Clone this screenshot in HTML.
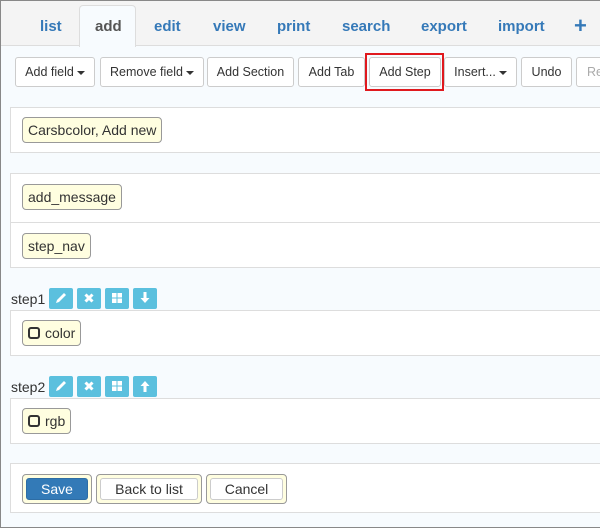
<!DOCTYPE html>
<html><head><style>
*{box-sizing:border-box;margin:0;padding:0}
body{width:600px;height:528px;overflow:hidden;font-family:"Liberation Sans",Arial,sans-serif;background:#fff}
.frame{position:absolute;left:0;top:0;width:620px;height:528px;border:1px solid #888;background:#f7fbfe}
.tabbar{position:absolute;left:1px;top:1px;width:620px;height:45px;background:#f4f4f4;border-bottom:1px solid #ddd}
.tab{position:absolute;top:18px;font-weight:bold;font-size:15px;color:#3579b8}
.active{position:absolute;left:79px;top:5px;width:57px;height:42px;background:#f7fbfe;border:1px solid #ddd;border-bottom:none;border-radius:4px 4px 0 0}
.btn{position:absolute;top:57px;height:30px;border:1px solid #ccc;border-radius:3px;background:#fff;font-size:12.5px;color:#333;text-align:center;line-height:28px}
.car{display:inline-block;border-left:4px solid transparent;border-right:4px solid transparent;border-top:4px solid #333;vertical-align:middle;margin-left:3px}
.panel{position:absolute;left:10px;width:600px;background:#fff;border:1px solid #ddd}
.chip{position:absolute;left:22px;height:26px;border:1px solid #999;border-radius:4px;background:#fffee0;font-size:14px;color:#333;line-height:24px;padding:0 5px}
.sq{display:inline-block;width:12px;height:12px;border:2.5px solid #333;border-radius:3px;vertical-align:-1px;margin-right:5px}
.lbl{position:absolute;left:11px;font-size:14px;color:#333}
.ib{position:absolute;width:24px;height:21px;background:#5bc0de;border-radius:2px}
.ib svg{position:absolute;left:5px;top:3px}
.wrap{position:absolute;top:474px;height:30px;border:1px solid #999;border-radius:4px;background:#fffee0;padding:3px}
.wrap div{height:22px;border:1px solid #ccc;border-radius:3px;background:#fff;font-size:14px;color:#333;line-height:20px;text-align:center}
</style></head><body>
<div class="frame"></div>
<div class="tabbar"></div>
<div class="active"></div>
<span class="tab" style="left:40px">list</span>
<span class="tab" style="left:95px;color:#555">add</span>
<span class="tab" style="left:154px">edit</span>
<span class="tab" style="left:213px">view</span>
<span class="tab" style="left:277px">print</span>
<span class="tab" style="left:342px">search</span>
<span class="tab" style="left:421px">export</span>
<span class="tab" style="left:498px">import</span>
<span class="tab" style="left:574px;top:13px;font-size:22px">+</span>
<div class="btn" style="left:15px;width:80px">Add field<span class="car"></span></div>
<div class="btn" style="left:100px;width:104px">Remove field<span class="car"></span></div>
<div class="btn" style="left:207px;width:87px">Add Section</div>
<div class="btn" style="left:298px;width:67px">Add Tab</div>
<div style="position:absolute;left:365px;top:53px;width:79px;height:38px;border:2px solid #e0191e"></div>
<div class="btn" style="left:369px;width:72px">Add Step</div>
<div class="btn" style="left:444px;width:73px">Insert...<span class="car"></span></div>
<div class="btn" style="left:521px;width:51px">Undo</div>
<div class="btn" style="left:576px;width:40px;color:#aaa;text-align:left;padding-left:10px">Re</div>
<div class="panel" style="top:107px;height:46px"></div>
<div class="chip" style="top:117px">Carsbcolor, Add new</div>
<div class="panel" style="top:173px;height:95px"></div>
<div style="position:absolute;left:11px;top:222px;width:600px;height:1px;background:#ddd"></div>
<div class="chip" style="top:184px">add_message</div>
<div class="chip" style="top:233px">step_nav</div>

<div class="lbl" style="top:291px">step1</div>
<div class="ib" style="left:49px;top:288px"><svg width="14" height="14" viewBox="0 0 14 14"><path d="M2 12 L3 9 L10 2 L12 4 L5 11 Z" fill="#fff"/></svg></div>
<div class="ib" style="left:77px;top:288px"><svg width="14" height="14" viewBox="0 0 14 14"><path d="M3.5 3.5 L10.5 10.5 M10.5 3.5 L3.5 10.5" stroke="#fff" stroke-width="3"/></svg></div>
<div class="ib" style="left:105px;top:288px"><svg width="14" height="14" viewBox="0 0 14 14"><path d="M2 2h4.5v4.5H2zM7.5 2H12v4.5H7.5zM2 7.5h4.5V12H2zM7.5 7.5H12V12H7.5z" fill="#fff"/></svg></div>
<div class="ib" style="left:133px;top:288px"><svg width="14" height="14" viewBox="0 0 14 14"><path d="M5.5 1h3v6h3L7 12 2.5 7h3z" fill="#fff"/></svg></div>
<div class="panel" style="top:310px;height:46px"></div>
<div class="chip" style="top:320px"><span class="sq"></span>color</div>

<div class="lbl" style="top:379px">step2</div>
<div class="ib" style="left:49px;top:376px"><svg width="14" height="14" viewBox="0 0 14 14"><path d="M2 12 L3 9 L10 2 L12 4 L5 11 Z" fill="#fff"/></svg></div>
<div class="ib" style="left:77px;top:376px"><svg width="14" height="14" viewBox="0 0 14 14"><path d="M3.5 3.5 L10.5 10.5 M10.5 3.5 L3.5 10.5" stroke="#fff" stroke-width="3"/></svg></div>
<div class="ib" style="left:105px;top:376px"><svg width="14" height="14" viewBox="0 0 14 14"><path d="M2 2h4.5v4.5H2zM7.5 2H12v4.5H7.5zM2 7.5h4.5V12H2zM7.5 7.5H12V12H7.5z" fill="#fff"/></svg></div>
<div class="ib" style="left:133px;top:376px"><svg width="14" height="14" viewBox="0 0 14 14"><path d="M5.5 13h3V7h3L7 2 2.5 7h3z" fill="#fff"/></svg></div>
<div class="panel" style="top:398px;height:46px"></div>
<div class="chip" style="top:408px"><span class="sq"></span>rgb</div>

<div class="panel" style="top:463px;height:50px"></div>
<div class="wrap" style="left:22px;width:70px"><div style="background:#337ab7;border-color:#2e6da4;color:#fff">Save</div></div>
<div class="wrap" style="left:96px;width:106px"><div>Back to list</div></div>
<div class="wrap" style="left:206px;width:81px"><div>Cancel</div></div>
</body></html>
